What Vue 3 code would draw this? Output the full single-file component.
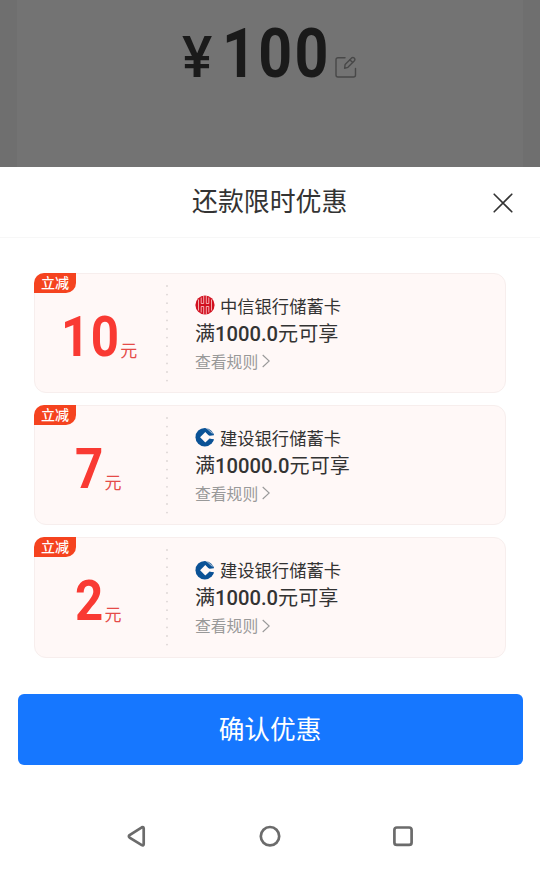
<script setup>
const offers = [
  { amount: '10', bank: 'citic', name: '中信银行储蓄卡', limit: '1000.0' },
  { amount: '7', bank: 'ccb', name: '建设银行储蓄卡', limit: '10000.0' },
  { amount: '2', bank: 'ccb', name: '建设银行储蓄卡', limit: '1000.0' },
]
</script>

<template>
  <div class="screen">
    <div class="backdrop">
      <div class="panel">
        <span class="yen">¥</span>
        <span class="total">100</span>
        <svg class="edit" viewBox="0 0 22 22" fill="none" stroke="#484848" stroke-width="1.4" stroke-linecap="round">
          <path d="M10 1.700H3a2 2 0 0 0-2 2V19a2 2 0 0 0 2 2h15.500a2 2 0 0 0 2-2v-6.500" />
          <path d="M9.600 12.400l.5-3.900 6.500-6.600q1.300-1 2.600.2t.2 2.600l-6.500 6.600z" stroke-linejoin="round" />
          <path d="M15 3.900l2.500 2.400" />
        </svg>
      </div>
    </div>
    <div class="sheet">
      <header class="head">
        <h1 class="title">还款限时优惠</h1>
        <svg class="close" viewBox="0 0 20 20" stroke="#333" stroke-width="1.6" stroke-linecap="round">
          <path d="M1.200 1.200l17.600 17.600M18.800 1.200L1.200 18.800" />
        </svg>
      </header>
      <main class="offers">
        <section v-for="(o, i) in offers" :key="i" class="offer">
          <span class="tag">立减</span>
          <div class="value">
            <span class="amount" :class="{ wide: o.amount.length > 1 }">{{ o.amount }}</span><span class="unit">元</span>
          </div>
          <svg class="divider" viewBox="0 0 2 98">
            <path d="M1 1V98" stroke="#dcd5d4" stroke-width="1.800" stroke-linecap="round" stroke-dasharray="0 8.600" />
          </svg>
          <div class="info">
            <div class="bank">
              <svg v-if="o.bank === 'citic'" class="logo" viewBox="0 0 20 20" fill="none">
                <circle cx="10" cy="10" r="9.600" fill="#d2101f" />
                <g stroke="#ffdedc" stroke-width=".75">
                  <path d="M3.500 4.500v11M16.500 4.500v11" />
                  <path d="M6.200 2.500v6M8.700 1v7.500M11.300 1v7.500M13.800 2.500v6" />
                  <path d="M6.200 17.500v-6M8.700 19v-7.500M11.300 19v-7.500M13.800 17.500v-6" />
                  <path d="M6.200 8.500h2.500M11.300 8.500h2.500M6.200 11.500h2.500M11.300 11.500h2.500" />
                </g>
              </svg>
              <svg v-else class="logo" viewBox="0 0 20 20">
                <circle cx="9.800" cy="10.200" r="9.300" fill="#0b5296" />
                <path d="M10.300 5l3.200 3.200h7v4h-5.200l-5 3.400-5.200-5.300z" fill="#fff8f7" />
                <path d="M10.300 15.700l4.200-4.300 4.400 1.200-3 4.500z" fill="#0b5296" />
                <path d="M11 5.200l3.600 3.600 4-.8-2.200-3.600z" fill="#0b5296" />
                <path d="M10.800.4l6.700 6.200M13.500.5l5 5.500" stroke="#fff8f7" stroke-width=".7" />
              </svg>
              <span>{{ o.name }}</span>
            </div>
            <div class="limit">满<b>{{ o.limit }}</b>元可享</div>
            <div class="rules">
              <span>查看规则</span>
              <svg class="chevron" viewBox="0 0 8 14" fill="none" stroke="#999" stroke-width="1.100">
                <path d="M.7 1l6.500 6-6.500 6" />
              </svg>
            </div>
          </div>
        </section>
      </main>
      <button class="confirm">确认优惠</button>
      <nav class="nav">
        <svg viewBox="0 0 24 24"><path d="M18.700 4.300v15.800q-.2 1.900-1.900 1L4.600 13.600q-1.500-1.300 0-2.600L16.800 3.300q1.700-.9 1.900 1z" /></svg>
        <svg viewBox="0 0 24 24"><circle cx="12" cy="12.200" r="9.200" /></svg>
        <svg viewBox="0 0 24 24"><rect x="3.400" y="3.500" width="17.200" height="17.400" rx="2.500" /></svg>
      </nav>
    </div>
  </div>
</template>

<style>
body {
  margin: 0;
}
</style>

<style scoped>
.screen {
  display: flex;
  flex-direction: column;
  width: 540px;
  height: 871px;
  overflow: hidden;
  background: #fff;
  color: #333;
  font-family: Roboto, "Noto Sans CJK SC", sans-serif;
}
.backdrop {
  box-sizing: border-box;
  height: 167px;
  padding: 0 17px;
  background: #6f6f6f;
}
.panel {
  display: flex;
  box-sizing: border-box;
  height: 167px;
  padding: 12px 0 0 165px;
  background: #737373;
  color: #1a1a1a;
}
.yen {
  width: 40px;
  font-size: 57px;
  font-weight: 500;
  line-height: 91px;
}
.total {
  width: 108px;
  font-size: 68px;
  font-weight: 700;
  line-height: 84px;
  letter-spacing: 2.700px;
  transform: scaleX(0.87);
  transform-origin: left;
}
.edit {
  width: 22px;
  height: 22px;
  margin: 44px 0 0 5px;
}
.sheet {
  display: flex;
  flex: 1;
  flex-direction: column;
}
.head {
  display: flex;
  align-items: center;
  box-sizing: border-box;
  height: 71px;
  padding: 0 27.500px 0 192px;
  border-bottom: 1px solid #f7f7f7;
}
.title {
  flex: 1;
  margin: 0;
  font-size: 25.900px;
  font-weight: 400;
  line-height: 73px;
}
.close {
  width: 20px;
  height: 20px;
  margin-top: 2px;
}
.offers {
  display: flex;
  flex-direction: column;
  gap: 12px;
  padding: 34.500px 34px 0;
}
.offer {
  position: relative;
  display: flex;
  box-sizing: border-box;
  height: 120.400px;
  border: 1px solid #f7eeed;
  border-radius: 12px;
  background: #fff8f7;
}
.tag {
  position: absolute;
  top: -1px;
  left: -1px;
  width: 42px;
  height: 20px;
  border-radius: 10px 0 10px 0;
  background: #f5431f;
  color: #fff;
  font-size: 14px;
  font-weight: 500;
  line-height: 20px;
  text-align: center;
}
.value {
  display: flex;
  align-items: baseline;
  justify-content: center;
  width: 126px;
  padding-top: 26px;
  color: #f93a33;
  line-height: 76px;
}
.amount {
  margin-right: -3px;
  font-size: 56px;
  font-weight: 700;
  letter-spacing: 1px;
  transform: translate(-3px, -1px) scaleX(0.88);
  transform-origin: right;
}
.amount.wide {
  margin-right: -6px;
  letter-spacing: 1.500px;
  transform: translate(-6px, -1px) scaleX(0.88);
}
.unit {
  color: #e54b48;
  font-size: 17px;
  line-height: 20px;
}
.divider {
  width: 2px;
  height: 98px;
  margin: 11px 0 0 5px;
}
.info {
  padding: 17px 0 0 27px;
}
.bank {
  display: flex;
  align-items: center;
  gap: 5px;
  height: 29px;
  font-size: 17.300px;
}
.logo {
  width: 20px;
  height: 20px;
}
.limit {
  font-size: 20.100px;
  line-height: 29px;
}
.limit b {
  font-size: 20.200px;
  font-weight: 500;
}
.rules {
  display: flex;
  align-items: center;
  gap: 4px;
  height: 25px;
  color: #999;
  font-size: 15.800px;
}
.chevron {
  width: 8px;
  height: 14px;
}
.confirm {
  height: 71px;
  margin: 36.800px 17.500px 0;
  padding: 1px 0 0;
  border: 0;
  border-radius: 6px;
  background: #1677ff;
  color: #fff;
  font-family: inherit;
  font-size: 25.700px;
  line-height: 70px;
}
.nav {
  display: flex;
  justify-content: space-between;
  padding: 58.800px 125px 0;
}
.nav svg {
  width: 24px;
  height: 24px;
  fill: none;
  stroke: #6b6b6b;
  stroke-width: 2.700;
}
</style>
